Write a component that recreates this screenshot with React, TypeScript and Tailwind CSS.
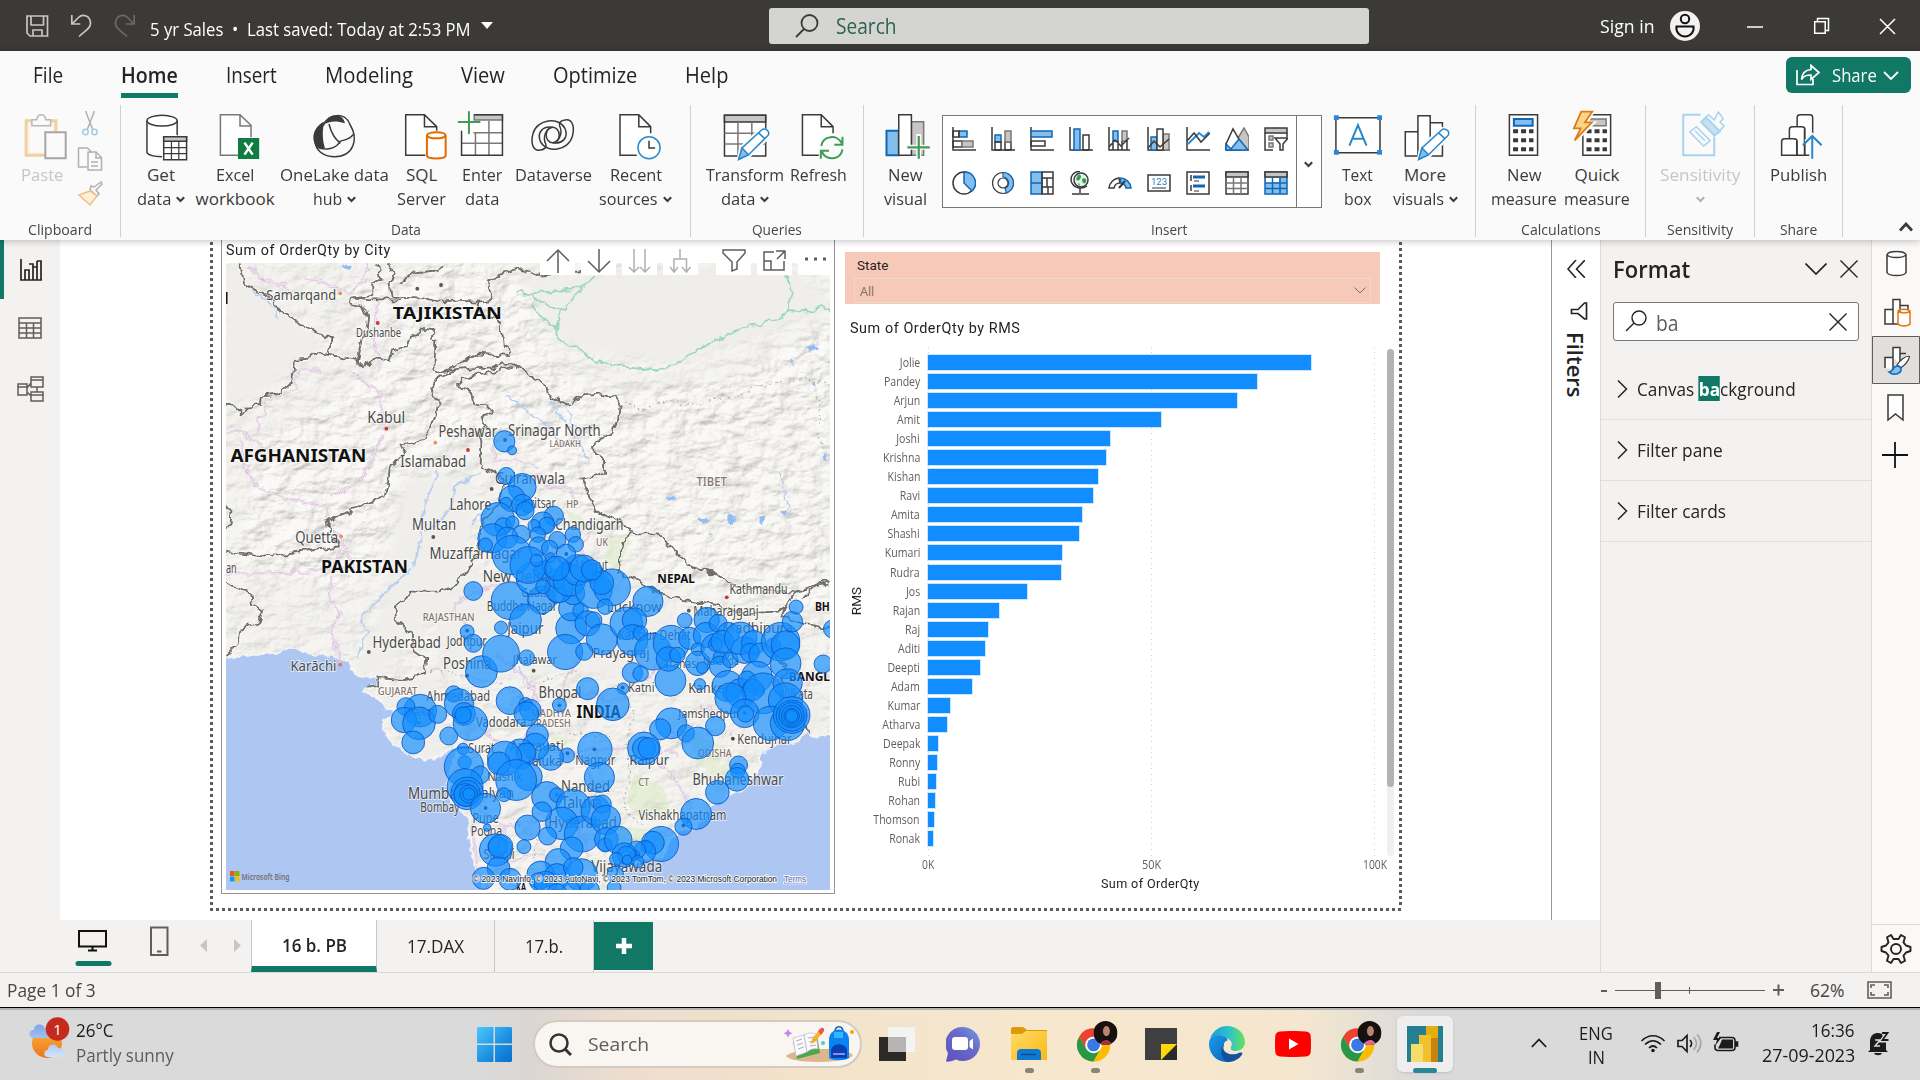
import React, { useLayoutEffect, useRef, useState } from "react";

type Kids = { children?: React.ReactNode };

/* Text squeezed or stretched horizontally to fill the width of its box. */
function Fit({ className = "", children }: Kids & { className?: string }) {
  const box = useRef<HTMLSpanElement>(null);
  const text = useRef<HTMLSpanElement>(null);
  const [k, setK] = useState(1);
  useLayoutEffect(() => {
    if (box.current && text.current) setK(box.current.clientWidth / text.current.offsetWidth);
  }, []);
  return (
    <span ref={box} className={"block shrink-0 whitespace-nowrap " + className}>
      <span ref={text} className="inline-block origin-left" style={{ transform: `scaleX(${k})` }}>
        {children}
      </span>
    </span>
  );
}

/* Free-stretch drawing surface with constant stroke widths. */
function Draw({ box, className = "", children }: Kids & { box: string; className?: string }) {
  return (
    <svg
      viewBox={box}
      preserveAspectRatio="none"
      fill="none"
      stroke="#3b3a39"
      strokeWidth="1.5"
      className={"block shrink-0 [&_*]:[vector-effect:non-scaling-stroke] " + className}
    >
      {children}
    </svg>
  );
}

const Chev = ({ className = "text-[#3b3a39]" }: { className?: string }) => (
  <svg viewBox="0 0 9 7" className={"block h-[7px] w-[9px] shrink-0 " + className} fill="none" stroke="currentColor" strokeWidth="2">
    <path d="M.8 1.2 4.5 5 8.2 1.2" />
  </svg>
);

/* ---------------------------------------------------------------- title */
function TitleBar() {
  return (
    <header className="flex h-[51px] shrink-0 items-center bg-[#3b3a38] text-white">
      <svg viewBox="24 12 114 30" className="ml-6 h-[30px] w-[114px]" fill="none" stroke="#c8c6c4" strokeWidth="1.7">
        <path d="M27 17h20.500v20H30l-3-3zM31 17v9h12.500v-9M33 37v-6h9v6" />
        <path d="M71.800 16v9h8.500M72 25l6.500-6.500C83 14 90.500 17 90.500 24.500c0 5-5 7-11.500 13" />
        <path stroke="#6b6967" d="M134.200 16v9h-8.500M134 25l-6.500-6.500C123 14 115.500 17 115.500 24.500c0 5 5 7 11.500 13" />
      </svg>
      <Fit className="ml-[12px] w-[321px] pt-[6px] text-[18px] leading-6">5 yr Sales&nbsp; •&nbsp; Last saved: Today at 2:53 PM</Fit>
      <span className="ml-[10px] h-0 w-0 border-x-[6.500px] border-t-[7px] border-x-transparent border-t-white" />
      <div className="ml-[276px] flex h-9 w-[600px] items-center rounded-[3px] bg-[#d4d4d1] pt-px text-[#2d6156]">
        <svg viewBox="0 0 24 24" className="ml-[26px] h-6 w-6" fill="none" stroke="#3b3a39" strokeWidth="1.8">
          <circle cx="14.500" cy="9" r="8" />
          <path d="M9 15 1 23" />
        </svg>
        <Fit className="ml-[17px] w-[61px] text-[21px] leading-7">Search</Fit>
      </div>
      <Fit className="ml-[231px] w-[55px] pt-px text-[18px] leading-6">Sign in</Fit>
      <svg viewBox="0 0 30 30" className="ml-[15px] h-[30px] w-[30px]">
        <circle cx="15" cy="15" r="15" fill="#f3f2f1" />
        <g fill="none" stroke="#111" strokeWidth="2">
          <circle cx="15" cy="8" r="4.200" />
          <path d="M6.500 15.500h17c1 5-3 10-8.500 10s-9.500-5-8.500-10z" />
        </g>
      </svg>
      <svg viewBox="1745 16 154 24" className="ml-[45px] h-6 w-[154px]" fill="none" stroke="#fff" strokeWidth="1.5">
        <path d="M1747 29h16M1814.700 23.700h10.500v11.500h-10.500zM1817.500 23v-2.500h11v12h-2.700M1880 21l15 15m0-15-15 15" />
      </svg>
    </header>
  );
}

/* ---------------------------------------------------------------- ribbon */
const tabs: [string, string][] = [
  ["File", "w-[30px] mr-[10px]"],
  ["Home", "w-[57px]"],
  ["Insert", "w-[51px]"],
  ["Modeling", "w-[88px]"],
  ["View", "w-[44px]"],
  ["Optimize", "w-[84px]"],
  ["Help", "w-[43px]"],
];

function Tabs() {
  return (
    <nav className="flex h-[54px] gap-12 pl-[33px] pt-2 text-[21px] leading-8 text-[#252423]">
      {tabs.map(([t, w]) => (
        <div key={t} className={"h-[39px] " + w + (t === "Home" ? " border-b-[5px] border-[#117865] font-semibold" : "")}>
          <Fit>{t}</Fit>
        </div>
      ))}
      <div className="-mt-[2px] ml-auto mr-[9px] flex h-9 w-[125px] items-center rounded-md bg-[#117865] text-white">
        <svg viewBox="0 0 24 22" className="ml-[10px] h-[22px] w-6" fill="none" stroke="#fff" strokeWidth="1.700">
          <path d="M1 6v14.500h16V15M15 1.500l8 7-8 7V11c-5 0-8 1.500-9.500 4.500C6 9 9 6 15 5.500z" />
        </svg>
        <Fit className="ml-3 w-[45px] text-[18.500px]">Share</Fit>
        <svg viewBox="0 0 16 9" className="ml-[6px] h-[9px] w-4" fill="none" stroke="#fff" strokeWidth="1.800">
          <path d="m1 1 7 7 7-7" />
        </svg>
      </div>
    </nav>
  );
}

function Group({ label, className, lw, children }: Kids & { label: string; className: string; lw: string }) {
  return (
    <section className={"flex h-[132px] shrink-0 flex-col border-r border-[#d2d0ce] " + className}>
      <div className="flex h-[114px] pt-[3px]">{children}</div>
      <div className="flex h-[18px] justify-center text-[15px] leading-[20px] text-[#484644]">
        <Fit className={lw}>{label}</Fit>
      </div>
    </section>
  );
}

type BtnProps = Kids & { w: string; box: string; a: string; aw: string; b?: string; bw?: string; chev?: boolean; off?: boolean };
function Btn({ w, box, a, aw, b, bw = "", chev, off, children }: BtnProps) {
  return (
    <div className={"flex shrink-0 flex-col items-center text-[17px] leading-6 " + w + (off ? " text-[#c8c6c4]" : " text-[#3b3a39]")}>
      <Draw box={box} className="mb-px h-[54px] w-full">{children}</Draw>
      <Fit className={aw}>{a}</Fit>
      <div className="flex h-6 items-center justify-center gap-[5px]">
        {b && <Fit className={bw}>{b}</Fit>}
        {chev && <Chev className={off ? "text-[#b3b0ad]" : "text-[#3b3a39]"} />}
      </div>
    </div>
  );
}

const Small = ({ children }: Kids) => (
  <svg viewBox="0 0 24 24" className="h-6 w-6" fill="none" stroke="#3b3a39" strokeWidth="1.500">{children}</svg>
);
const B = "#83beec";
const BS = "#1267b4";
const G = "#c8c6c4";

const gallery: React.ReactNode[] = [
  <><path d="M1 0v23h23" /><path fill={B} stroke={BS} d="M7 4h8v6H7z" /><path d="M1 4h6v6H1zM1 14h9v6H1z" /><path fill={G} stroke="#7a7876" d="M10 14h11v6H10z" /></>,
  <><path d="M1 0v23h23" /><path fill={B} stroke={BS} d="M4 8h6v7H4z" /><path d="M4 15h6v8H4zM14 15h6v8h-6z" /><path fill={G} stroke="#7a7876" d="M14 4h6v11h-6z" /></>,
  <><path d="M1 0v23h23" /><path fill={B} stroke={BS} d="M1 4h21v6H1z" /><path d="M1 14h14v5H1z" /></>,
  <><path d="M1 0v23h23" /><path fill={B} stroke={BS} d="M5 2h6v21H5z" /><path d="M14 8h6v15h-6z" /></>,
  <><path d="M1 0v23h21" /><path fill={B} stroke={BS} d="M5 4h5v10H5z" /><path fill={G} stroke="#7a7876" d="M14 4h5v10h-5z" /><path d="M5 14v9M10 14v9M14 14v9M19 14v9M1 20l6-7 6 6 8-8" /></>,
  <><path d="M1 0v23h22" /><path fill={B} stroke={BS} d="M4 10h6v13H4z" /><path fill={G} stroke="#7a7876" d="M16 7h6v16h-6z" /><path fill="#fff" d="M10 2h6v21h-6z" /><path d="m1 21 6-7 6 6 9-8" /></>,
  <><path d="M1 0v23h23" /><path stroke="#2b88d8" strokeWidth="2" d="m2 17 11-11 5 4 5-5" /><path d="m1 14 7-8 7 9 9-9" /></>,
  <><path fill={G} stroke="#7a7876" d="M13 11 19 1l5 9v13h-6z" /><path fill="#fff" d="M1 17 8 2l8 14v7H1z" /><path fill={B} stroke={BS} d="M1 17l5 5 8-10 9 11H1z" /></>,
  <><path fill={G} d="M1 1h22v5H1z" /><path d="M1 6v17h8M23 6v4" /><path fill={G} stroke="#7a7876" d="M5 9h4v4H5zM5 16h4v4H5z" /><path fill="#fff" d="M11 11h13l-5 6v6h-3v-6z" /></>,
  <><circle cx="12" cy="12" r="11" fill="#fff" /><path fill={B} stroke={BS} d="M12 1a11 11 0 0 1 8 19l-8-8z" /></>,
  <><circle cx="12" cy="12" r="10.500" strokeWidth="1.200" /><path fill={B} stroke={BS} strokeWidth="1.200" d="M12 1.500a10.500 10.500 0 0 1 3.500 20.400l-1.500-4.400A6 6 0 0 0 12 6z" /><circle cx="12" cy="12" r="5" fill="#fff" strokeWidth="1.200" /></>,
  <><path fill={B} stroke={BS} d="M1 1h11v22H1zM1 12h11" /><path d="M12 1h11v22H12zM12 7h11M17 7v9M12 16h11M18 16v7" /></>,
  <><circle cx="12" cy="9" r="7" fill="#e8f5ea" /><path fill="#2f9e4f" stroke="none" d="M9 4c3-1 4 2 2 4-1 2-3 2-4 0zM13 8c3-2 5 0 4 3-2 3-4 1-4-3zM9 12l2 1-1 2z" /><path d="M11 .5C4 0 1 6 2.500 11c2 6 10 8 15.500 4M11 17v5M3 23h17" /></>,
  <><path fill="#fff" d="M1 17a11 11 0 0 1 10-10l1 5a6 6 0 0 0-6 5z" /><path fill={B} stroke={BS} d="M12 7a11 11 0 0 1 11 10h-5a6 6 0 0 0-5-5z" /><path strokeWidth="2" d="m11 17 6-7" /></>,
  <><path fill="#fff" d="M1 4h22v16H1z" /><text x="4" y="14" fontSize="9.500" fill="#1f7fc9" stroke="none" fontFamily="Roboto" textLength="16">123</text><path d="M5 17h14" stroke="#7a7876" /></>,
  <><path fill="#fff" d="M1 1h22v22H1z" /><path d="M5 4v6M5 14v6" /><path stroke={BS} strokeWidth="3" d="M7 6h12M7 15h12" /><path stroke="#7a7876" d="M8 10h5M8 20h5" /></>,
  <><path fill="#fff" d="M1 1h22v22H1z" /><path fill={G} d="M1 1h22v5H1z" /><path stroke="#7a7876" d="M1 12h22M1 17.500h22M8.500 6v17M16 6v17" /></>,
  <><path fill={B} stroke={BS} d="M1 1h22v22H1z" /><path fill={G} d="M1 1h22v5H1z" /><path fill="#fff" stroke="none" d="M2 7h6v5H2zM9 7h6v4H9z" /><path stroke={BS} d="M1 12h22M1 17.500h22M8.500 6v17M16 6v17" /></>,
];

function Ribbon() {
  return (
    <div className="flex h-[135px] pb-[3px]">
      <Group label="Clipboard" className="w-[121px]" lw="w-[64px]">
        <div className="ml-[12px] flex w-[60px] flex-col items-center text-[17px] leading-6 text-[#c8c6c4]">
          <Draw box="29.400 324 147 162" className="mb-px h-[54px] w-[60px]">
            <path stroke="#f0cfa8" strokeWidth="3" fill="#fdf3e2" d="M64 362h73v104H64z" />
            <path fill="#fafafa" stroke="none" d="M74 376h54v80H74z" />
            <path fill="#fafafa" stroke="#b9b7b5" d="M78 377v-18h12c2-20 20-20 22 0h12v18z" />
            <path fill="#fafafa" stroke="#a9a7a5" strokeWidth="2" d="M111 397h50v78h-50z" />
          </Draw>
          <Fit className="w-[42px]">Paste</Fit>
        </div>
        <svg viewBox="76 108 28 100" className="ml-[4px] h-[100px] w-7" fill="none" stroke="#b3b1af" strokeWidth="1.500">
          <path d="m85.500 111 7 18M94.500 111l-7 18" />
          <g stroke="#9fcbe8"><circle cx="85.500" cy="132" r="2.700" /><circle cx="94.500" cy="132" r="2.700" /></g>
          <path d="M87 167h-8.500v-19h9l3 3v2M88 152h8l5.500 5.500V170H88zM96 152v6h5.500M91 162h7M91 166h7" />
          <path d="m90 190 7 6 2-2-3-4 6-6-1-2-7 5-3-1z" />
          <path stroke="#efc08a" fill="#fdeed8" d="m90 191-11 4 11 10 7-9z" />
        </svg>
      </Group>

      <Group label="Data" className="w-[570px] pl-[11px]" lw="ml-[-11px] w-[30px]">
        <Btn w="w-[58px]" box="323.400 324 142 162" a="Get" aw="w-[28px]" b="data" bw="w-[34px]" chev>
          <path fill="#fff" stroke="none" d="M360 362c10-20 65-20 75 0v100h-75z" />
          <ellipse cx="397" cy="362" rx="37" ry="16" />
          <path d="M360 362v96c4 8 20 12 37 12M434 362v44" />
          <path fill="#fff" d="M401 410h56v69h-56z" /><path fill={G} d="M401 410h56v14h-56z" />
          <path strokeWidth="1.200" d="M401 443h56M401 461h56M420 424v55M438 424v55" />
        </Btn>
        <Btn w="w-[90px]" box="465.500 324 220.500 162" a="Excel" aw="w-[38px]" b="workbook" bw="w-[79px]">
          <path fill="#fff" stroke="#7a7876" d="M583 466h-43V344h48l27 32v36M588 344v34h27" />
          <path fill="#107c41" stroke="none" d="M583 414h52v63h-52z" />
          <path stroke="#fff" strokeWidth="2.500" d="m599 428 20 36M619 428l-20 36" />
        </Btn>
        <Btn w="w-[109px]" box="686 324 267 162" a="OneLake data" aw="w-[109px]" b="hub" bw="w-[29px]" chev>
          <path d="M793 375c10-35 55-40 65 0 20 40 10 94-38 95-50 0-65-60-27-95z" />
          <path fill="#3b3a39" stroke="none" d="M795 372c8-35 46-35 50-2-20-8-35-8-50 2zM792 366c-28 20-32 60-10 80l14-3c-8-30-5-58-2-77z" />
          <path d="M776 440c20 15 50 5 57-16 10-5 20-2 34-22M806 372c4 20 14 45 28 58" />
        </Btn>
        <Btn w="w-[65px]" box="953 324 159.500 162" a="SQL" aw="w-[31px]" b="Server" bw="w-[49px]">
          <path fill="#fff" d="M1042 466h-48V344h46l30 36v12M1040 344v36h30" />
          <path fill="#fff" stroke="#e06c00" strokeWidth="2" d="M1046 406c4-12 42-12 46 0v62c-4 10-42 10-46 0zM1046 406c4 12 42 12 46 0" />
        </Btn>
        <Btn w="w-[56px]" box="1112.500 324 137 162" a="Enter" aw="w-[40px]" b="data" bw="w-[34px]">
          <path fill="#fff" stroke="none" d="M1130 362h101v104h-101z" />
          <path fill={G} stroke="#7a7876" d="M1162 344h69v16h-69z" />
          <path stroke="#7a7876" d="M1165 398v68M1198 362v104M1160 398h71M1130 430h101" />
          <path d="M1131 392v74h100V344h-69" />
          <path stroke="#3f9c55" strokeWidth="2" d="M1149 334v68M1122 366h55" />
        </Btn>
        <Btn w="w-[87px]" box="1249.500 324 213 162" a="Dataverse" aw="w-[77px]">
          <ellipse cx="1354" cy="405" rx="16" ry="23" />
          <path d="M1324 450c-20 4-24-24-18-50 10-42 62-52 78-15 10 30-8 48-30 43M1324 450c10-1 16-8 13-18-8-20 0-44 14-50" />
          <path d="M1384 360c20-4 24 24 18 50-10 42-62 52-78 15-10-30 8-48 30-43M1384 360c-10 1-16 8-13 18 8 20 0 44-14 50" />
        </Btn>
        <Btn w="w-[77px]" box="1462.600 324 188.600 162" a="Recent" aw="w-[52px]" b="sources" bw="w-[59px]" chev>
          <path fill="#fff" d="M1560 466h-41V344h46l29 36v20M1565 344v36h29" />
          <ellipse cx="1590" cy="443" rx="27" ry="33" fill="#fff" stroke="#2b88c8" />
          <path d="M1590 422v22h15" />
        </Btn>
      </Group>

      <Group label="Queries" className="w-[173px] pl-[14px]" lw="ml-[-14px] w-[50px]">
        <Btn w="w-[80px]" box="159.300 324 196 162" a="Transform" aw="w-[78px]" b="data" bw="w-[34px]" chev>
          <path fill="#fff" d="M207 346h101v122H207z" /><path fill={G} d="M207 346h101v20H207z" />
          <path stroke="#7a7876" d="M207 400h101M207 432h101M240 366v102M274 366v102" />
          <path fill="#fafafa" stroke="#fafafa" strokeWidth="4" d="m242 478 6-34 50-58 18 12-3 14-50 60z" />
          <path fill="#fff" stroke="#2b88c8" d="m242 478 8-34 48-54c6-8 22 2 16 16l-48 58zM290 398l16 18" />
          <path fill={B} stroke="#2b88c8" d="m242 478 8-34 16 20z" />
        </Btn>
        <Btn w="w-[67px]" box="355.300 324 164 162" a="Refresh" aw="w-[57px]">
          <path fill="#fff" d="M438 466h-40V344h46l29 36v20M444 344v36h29" />
          <path stroke="#3f9c55" strokeWidth="2" d="M444 438c4-32 40-36 50-8M496 410v24h-20M496 448c-4 32-40 36-50 8M443 476v-24h20" />
        </Btn>
      </Group>

      <Group label="Insert" className="w-[612px] pl-[13px]" lw="ml-[-15px] w-[36px]">
        <Btn w="w-[56px]" box="580.700 324 137.200 162" a="New" aw="w-[35px]" b="visual" bw="w-[43px]">
          <path fill={B} stroke={BS} strokeWidth="2" d="M604 392h30v74h-30z" />
          <path fill={G} stroke="#7a7876" d="M665 365h30v101h-30z" />
          <path fill="#fff" d="M634 344h31v122h-31z" />
          <path stroke="#fafafa" strokeWidth="5" d="M683 402v74M652 442h58" />
          <path stroke="#3f9c55" strokeWidth="2.200" d="M683 408v68M655 442h55" />
        </Btn>
        <div className="ml-[9px] mt-[7px] flex h-[93px] w-[380px] border border-[#7a7876] bg-white">
          <div className="grid w-[354px] grid-cols-[repeat(9,39px)] grid-rows-[44px_44px] border-r border-[#7a7876] pl-[9px] pt-[11px]">
            {gallery.map((g, i) => <Small key={i}>{g}</Small>)}
          </div>
          <div className="flex flex-1 items-center justify-center pr-px pt-[5px]"><Chev /></div>
        </div>
        <div className="w-2" />
        <Btn w="w-[55px]" box="122.500 324 134.800 162" a="Text" aw="w-[31px]" b="box" bw="w-[28px]">
          <path fill="#fff" d="M137 353h108v105H137z" />
          <path fill="#2b88d8" stroke="none" d="M132 346h12v14h-12zM238 346h12v14h-12zM132 450h12v14h-12zM238 450h12v14h-12z" />
          <path stroke="#2b88c8" strokeWidth="2" d="m170 437 21-62 21 62M178 416h27" />
        </Btn>
        <Btn w="w-[80px]" box="257.300 324 196 162" a="More" aw="w-[42px]" b="visuals" bw="w-[51px]" chev>
          <path fill="#fff" d="M307 395h31v73h-31zM368 368h30v100h-30zM338 347h30v121h-30z" />
          <path fill="#fafafa" stroke="#fafafa" strokeWidth="4" d="m340 478 6-34 50-58 18 12-3 14-50 60z" />
          <path fill="#fff" stroke="#2b88c8" d="m340 478 8-34 48-54c6-8 22 2 16 16l-48 58zM388 398l16 18" />
          <path fill={B} stroke="#2b88c8" d="m340 478 8-34 16 20z" />
        </Btn>
      </Group>

      <Group label="Calculations" className="w-[170px] pl-[12px]" lw="ml-[-12px] w-[80px]">
        <Btn w="w-[72px]" box="509.600 324 176.400 162" a="New" aw="w-[35px]" b="measure" bw="w-[66px]">
          <path fill="#fff" d="M562 344h69v122h-69z" /><path fill={B} stroke={BS} strokeWidth="2" d="M573 357h46v20h-46z" />
          <path strokeWidth="4" strokeDasharray="5 3" d="M571 394h50M571 421h50M571 448h50" />
        </Btn>
        <Btn w="w-[74px]" box="686 324 181.300 162" a="Quick" aw="w-[45px]" b="measure" bw="w-[66px]">
          <path fill="#fff" d="M742 344h68v122h-68z" /><path fill={G} stroke="#7a7876" d="M755 357h44v20h-44z" />
          <path strokeWidth="4" strokeDasharray="5 3" d="M751 394h50M751 421h50M751 448h50" />
          <path fill="#fafafa" stroke="#fafafa" strokeWidth="5" d="m735 335-14 50h16l-14 36 40-50h-16l17-36z" />
          <path fill="#fbd58a" stroke="#e07a14" strokeWidth="1.800" d="m738 335-18 50h17l-15 36 42-54h-17l18-32z" />
        </Btn>
      </Group>

      <Group label="Sensitivity" className="w-[109px] pl-[9px]" lw="ml-[-9px] w-[66px]">
        <Btn w="w-[90px]" box="918.800 324 220.500 162" a="Sensitivity" aw="w-[80px]" chev off>
          <g stroke="#a9d3ec">
            <path d="M1030 344h-42v122h76v-56" strokeWidth="2" />
            <path d="m1020 380 34 42-16 16-34-42zM1017 392l24 30" />
            <path d="m1036 360 14-16 14 16 10-24 12 20-8 10 10 12-14 18-8-8" />
            <path fill="#c5e1f3" strokeWidth="2" d="m1032 366 12-14 34 42-14 12z" />
          </g>
        </Btn>
      </Group>

      <Group label="Share" className="w-[88px] pl-[5px]" lw="ml-[-5px] w-[37px]">
        <Btn w="w-[76px]" box="1176 324 186.200 162" a="Publish" aw="w-[57px]">
          <path fill="#fff" d="M1267 380V352c0-4 3-8 8-8h22c5 0 8 4 8 8v114h-20V388M1248 416v-28c0-4 3-8 8-8h22c5 0 8 4 8 8v78h-20v-42M1229 466v-42c0-4 3-8 8-8h22c5 0 8 4 8 8v42z" />
          <path stroke="#fafafa" strokeWidth="6" d="M1304 404v72M1290 428l14-18 14 18" />
          <path stroke="#2b88c8" strokeWidth="2" d="M1304 408v68M1281 436l23-28 23 28" />
        </Btn>
      </Group>
      <svg viewBox="0 0 14 10" className="ml-auto mr-[7px] mt-[117px] h-[10px] w-[14px]" fill="none" stroke="#3b3a39" strokeWidth="2.800">
        <path d="m1 8.500 6-6.500 6 6.500" />
      </svg>
    </div>
  );
}

/* ---------------------------------------------------------------- map */
/* Map grid units: 2.45 per pixel across, 3 per pixel down. */
const px = (x: number) => 210 + x / 2.45;
const py = (y: number) => 240 + y / 3;

const bubblesNorth: number[][] = [
  [721,604,26],[740,631,11],[726,708,21],[765,742,34],[740,776,32],[765,795,26],[725,789,14],[779,798,16],[772,812,22],[705,838,41],
  [718,858,20],[741,848,16],[842,828,24],[815,850,28],[825,856,20],[794,857,15],[762,883,22],[803,884,19],[692,895,36],[675,915,17],
  [728,893,26],[889,884,19],[896,913,19],[851,900,21],[805,920,24],[832,925,20],[740,945,48],[780,975,45],[872,942,24],
  [800,961,15],[834,953,12],[850,985,30],[915,985,33],[935,990,25],
];
const bubblesSouth: number[][] = [
  [645,93,23],[735,122,46],[812,120,34],[773,180,39],[790,55,40],[713,203,16],[630,215,17],[645,250,22],[665,335,39],[713,281,45],
  [776,293,19],[885,205,38],[870,276,43],[885,145,31],[908,152,19],[890,100,28],[850,100,24],[855,85,35],[846,45,15],[870,22,15],
  [850,65,18],[815,80,17],[815,30,22],[840,20,26],[880,60,40],[900,30,38],[940,40,24],[940,90,45],[985,82,45],[960,68,29],
  [968,140,19],[925,190,31],[940,180,20],[960,238,38],[917,275,21],[1073,124,37],[1020,190,40],[1040,180,30],[1035,240,38],
  [1055,220,18],[1085,275,45],[1130,250,44],[1035,338,25],[1055,341,19],[1128,362,38],[1123,297,30],[1145,285,19],[1163,181,18],
  [1175,235,27],[1217,180,31],[1215,225,31],[1195,268,16],[1195,310,30],[1206,323,14],[1245,190,22],[1270,220,27],[1240,265,37],
  [1238,253,17],[1248,290,15],[1250,320,26],[1275,300,19],[1255,245,28],[1310,270,33],[1300,235,40],[1332,248,30],[1323,278,23],
  [1350,285,30],[1380,256,18],[1398,245,47],[1410,255,35],[1410,310,38],[1427,185,25],[1436,141,17],[1525,207,22],[1502,312,22],
  [1340,350,38],[925,386,27],[1012,386,14],[987,433,40],[856,435,17],[1200,373,14],[1268,378,38],[1277,400,20],[1300,400,36],[1316,360,22],
  [1345,392,14],[1330,390,26],[1355,400,50],[1275,415,38],[1415,370,36],[1410,420,42],[1310,460,35],[1312,462,20],[1238,498,24],
  [1373,490,42],[1415,490,42],[1425,465,45],[1425,467,38],[1425,465,31],[1425,467,25],[1425,468,19],[1425,468,15],[1130,490,38],
  [1103,508,26],[1166,520,21],[1195,549,39],[1063,565,40],[1063,565,28],[1075,565,26],[1295,615,22],[1293,632,18],[1291,658,29],
  [1243,697,29],[1191,762,38],[1160,800,21],[943,568,42],[954,652,37],[875,586,18],[835,593,31],[802,525,27],[797,560,33],[760,582,37],
  [775,578,24],[722,595,42],[708,610,28],[735,422,34],[773,432,16],[785,450,26],[775,462,30],[515,452,40],[480,440,22],[475,480,31],
  [512,490,40],[558,463,22],[498,547,28],[585,528,22],[597,402,20],[610,430,36],[622,462,28],[638,490,42],[620,465,20],
  [620,567,14],[624,607,16],[622,620,48],[662,645,22],[625,680,44],[630,700,40],[630,700,32],[625,705,28],[634,702,22],[634,702,15],
  [675,745,37],[780,650,34],[750,660,50],[720,704,17],[825,710,37],[850,705,18],[890,740,42],[862,790,40],[813,755,24],[827,828,22],
  [778,803,31],[769,860,17],[912,822,44],[945,752,36],[961,732,22],[970,780,36],[971,838,29],[968,855,17],[1000,840,34],
  [886,865,28],[853,905,32],[679,803,9],[700,870,40],[705,860,24],[712,860,30],[707,925,28],[670,955,27],[735,958,27],[810,945,34],
  [850,950,32],[805,965,22],[822,968,28],[910,945,40],[890,922,24],[1105,852,43],[1085,848,28],[1070,860,14],[1065,875,27],[1045,870,22],
  [1040,885,12],[1015,885,30],[1020,885,22],[995,897,16],[1022,900,12],[1048,905,15],[993,943,20],[990,983,17],[930,990,24],
  [885,990,22],[850,1000,24],
];

type Label = [string, number, number, number, number, string];
const city = "#4a4a4a";
const land = "#111111";
const area = "#85746c";
const labels: Label[] = [
  ["Samarqand",138,180,171,15,city],["TAJIKISTAN",448,236,267,16.5,land],["Dushanbe",358,291,110,12,city],["Kabul",385,548,93,16,city],
  ["Peshawar",560,591,143,16,city],["Srinagar North",730,587,227,16,city],["LADAKH",832,621,77,9,area],["Islamabad",466,681,162,16,city],
  ["AFGHANISTAN",50,667,333,17,land],["Gujranwala",698,731,172,16,city],["TIBET",1192,739,74,12,area],["Lahore",587,809,103,16,city],
  ["Amritsar",744,803,103,14,city],["HP",873,803,30,11,area],["Chandigarh",845,870,168,16,city],["Multan",495,870,108,16,city],
  ["Quetta",209,908,105,16,city],["UK",946,919,29,11,area],["Muzaffarnagar",538,958,227,16,city],["Meerut",895,991,80,15,city],
  ["PAKISTAN",272,1000,213,17,land],["an",39,998,26,15,city],["New Delhi",668,1025,160,17,city],["NEPAL",1096,1030,92,13,land],
  ["Kathmandu",1273,1062,142,14,city],["BHU",1482,1114,56,12,land],["Maharajganj",1184,1128,160,14,city],["Gautam",763,1070,88,13,city],
  ["Buddha Nagar",678,1112,172,13.5,city],["RAJASTHAN",521,1142,127,10.5,area],["Lucknow",972,1115,134,15,city],["Jaipur",728,1182,89,15.5,city],
  ["Madhipura",1255,1179,173,15,city],["Kanpur Dehat",1000,1200,178,13.5,city],["Hyderabad",398,1223,168,16,city],["Jodhpur",580,1219,98,13.5,city],
  ["Prayagraj",937,1254,140,15,city],["Poshina",571,1288,119,15.5,city],["Jhalawar",742,1271,108,13,city],["Varanasi",1095,1284,103,13,city],
  ["Nalanda",1208,1274,88,13,city],["Karāchi",197,1294,113,15,city],["GUJARAT",411,1364,97,10.5,area],["Ahmedabad",530,1382,156,13.5,city],
  ["Bhopal",805,1375,105,16,city],["Katni",1024,1357,65,13,city],["Kankeshwar",1172,1358,175,14,city],["BANGL",1418,1323,101,13,land],
  ["Kolkata",1392,1378,85,14.5,city],["INDIA",898,1433,108,17,land],["Jamshedpur",1147,1435,153,13,city],["Vadodara",652,1461,123,14,city],
  ["MADHYA",787,1430,97,10.5,area],["PRADESH",785,1460,99,10.5,area],["Rajkot",485,1427,66,13,city],["Kendujhar",1292,1511,133,14,city],
  ["Amravati",735,1532,132,14.5,city],["Taluka",775,1578,87,14.5,city],["Surat",633,1540,65,14,city],["Nagpur",895,1575,98,14,city],
  ["Raipur",1027,1575,98,15,city],["ODISHA",1195,1552,83,10.5,area],["Nashik",680,1622,85,13,city],["CT",1049,1637,27,11,area],
  ["Bhubaneshwar",1182,1635,223,15.5,city],["Nanded",860,1655,120,15.5,city],["Mumbai",485,1676,128,16,city],["Kalyan",645,1675,100,14.5,city],
  ["Taluka",860,1704,100,15.5,city],["Bombay",515,1715,96,14,city],["Hyderabad",829,1764,168,16,city],["Vishakhapatnam",1050,1740,215,14,city],
  ["Pune",643,1748,64,13.5,city],["Poona",639,1787,77,14,city],["Sangli",670,1858,76,14.5,city],["Vijayawada",934,1896,174,16,city],
  ["KA",750,1952,24,11,land],
];
const dots: [number, number, string][] = [
  [411,249,"#c33"],[319,160,"#e8925c"],[432,566,"#c33"],[552,608,"#e8925c"],[632,630,"#c33"],[690,747,"#555"],[547,891,"#555"],[321,889,"#e8925c"],
  [723,600,"#335"],[1266,1072,"#c33"],[1173,1112,"#555"],[389,1236,"#555"],[319,1274,"#e8705c"],[793,1292,"#555"],[630,1172,"#334"],[1281,1496,"#444"],
  [876,1540,"#234"],[942,1528,"#234"],[1011,1343,"#234"],[1310,1419,"#345"],[856,1396,"#345"],[512,1448,"#345"],[630,1307,"#234"],[850,1665,"#345"],
  [675,1704,"#345"],[708,1815,"#345"],[1160,1756,"#234"],[873,942,"#234"],[508,146,"#555"],[566,135,"#555"],
];

const borders = [
  "M75 70 83 130 160 185 165 205 245 270 300 295 293 345 255 338 240 355 208 360 200 430 160 465 122 470 120 495 92 500 78 520 62 500 39 497",
  "M293 345 330 352 362 362 375 378 408 355 440 362 445 335 480 325 490 290 510 285 520 262 545 268 540 300 552 305 550 385 560 400 600 378 625 362 655 340 700 345 735 348 730 320 720 315 715 270 700 235 665 230 655 185",
  "M405 70 412 90 418 120 400 130 400 165 345 172 340 190 372 200 385 235 378 285 370 320 362 362M438 70 450 110 440 130 445 170 520 172 560 185 600 182 655 185 690 180 680 120 700 108 735 95 760 85 795 105 940 90M465 130 500 100 560 90 570 70M345 172 400 178 470 178",
  "M552 400 590 392 640 385 690 382 718 370 750 375 790 410 825 440 830 475 880 492 920 465 958 460 985 470 1005 482 1000 540 985 580 940 605 942 640 968 655 968 700 935 712 912 715 928 770 950 820 1000 840 1035 880 1100 880 1115 905 1135 925 1170 975 1240 1005 1290 1040 1360 1045 1432 1060 1450 1050 1519 1020",
  "M600 395C540 420 535 440 545 460L560 490 545 560 525 600 465 610 480 640 440 680 438 720 425 770 395 785 345 805 345 815 285 840 290 870 315 920 250 930 210 940 130 950 39 935",
  "M745 380 690 395 620 415 605 435 640 460 645 490 685 500 685 520 665 535 680 565 655 570 665 610 663 680 700 700 722 720 715 760 700 800 668 840 655 905 660 940 625 1000 600 1040 555 1055 490 1055 475 1080 455 1100 455 1140 490 1180 500 1235 530 1260 525 1300 480 1320 410 1315 410 1335 380 1340",
  "M1035 880 1015 900 1005 960 1000 1000 1050 1020 1100 1060 1160 1080 1240 1095 1310 1120 1390 1115 1410 1100 1430 1060M1410 1100 1400 1130 1450 1150 1519 1165M1450 1075 1480 1040 1519 1030M39 1030 100 1055 105 1095 130 1110 122 1145 75 1165 70 1215 39 1250M39 800 50 820 48 855 39 865",
  "M1400 1160 1390 1190 1375 1240 1420 1290 1400 1320 1445 1400 1465 1480",
];
const roads = [
  "M95 80 130 120 180 130 190 165M235 115 300 135 340 160 380 120 390 70M345 392 380 430 410 445 420 500 430 565M130 620 70 575 39 578M75 600 85 690 120 745 190 775 285 800 290 855 320 895 345 960 352 990M120 580 120 540 135 520 135 480 210 450 210 400 240 385 270 395M425 580 400 660 360 730 295 770",
  "M320 890 315 940 300 1000 290 1060 320 1120 290 1170 310 1220 320 1270M39 1000 200 1000 300 985M690 620 700 660 760 660 800 680M410 180 405 240 400 300 415 350 415 392",
  "M630 1160 600 1130 600 1090 690 1040 800 1020M800 700 820 740 880 740 900 790M930 870 910 930 920 990M600 1400 640 1450 630 1500 600 1600 630 1680 720 1760 800 1740 900 1760 930 1850M640 1450 700 1500 780 1520 880 1540 945 1525 1060 1530 1150 1540M870 1370 940 1360 985 1395M1060 1530 1130 1600 1180 1700 1130 1760 1000 1880M900 1550 930 1600 945 1700 900 1770M640 1750 650 1830 660 1900 680 1950M720 1760 700 1830 720 1890 760 1950",
  "M700 1240 760 1300 800 1360 790 1440 770 1500M900 1260 870 1320 855 1390M1200 1400 1260 1420 1340 1400M1130 1220 1080 1310 1010 1340M1519 1290 1470 1320 1440 1400M680 1900 760 1850 820 1840",
];
const scaled = "translate(210 240) scale(.40816 .33333)";
const thin = "[&_path]:[vector-effect:non-scaling-stroke]";

function MapArt() {
  return (
    <svg viewBox="226 263 604 627" className="block h-[627px] w-[604px] bg-[#efeeea]" fontFamily="'Noto Sans', 'Open Sans', sans-serif">
      <defs>
        <filter id="relief" x="0" y="0" width="100%" height="100%">
          <feTurbulence type="fractalNoise" baseFrequency="0.038 0.062" numOctaves="4" seed="7" />
          <feDiffuseLighting surfaceScale="4.500" diffuseConstant="1.070" lightingColor="#fffefa">
            <feDistantLight azimuth="225" elevation="60" />
          </feDiffuseLighting>
        </filter>
        <filter id="rough" filterUnits="userSpaceOnUse" x="210" y="250" width="640" height="650">
          <feTurbulence type="fractalNoise" baseFrequency="0.11" numOctaves="2" seed="4" result="n" />
          <feDisplacementMap in="SourceGraphic" in2="n" scale="9" xChannelSelector="R" yChannelSelector="G" />
        </filter>
        <filter id="soft"><feGaussianBlur stdDeviation="12" /></filter>
        <mask id="hills" maskUnits="userSpaceOnUse" x="226" y="263" width="604" height="627">
          <rect x="226" y="263" width="604" height="627" fill="#888" />
          <g transform={scaled} filter="url(#soft)">
            <path fill="#fff" d="M330 150 600 60 750 120 850 380 1010 470 1300 400 1519 250 1519 1100 1300 1080 1100 1000 960 850 780 650 700 600 560 620 460 700 430 900 330 1050 60 960 130 600 300 480 500 300z" />
            <path fill="#000" d="M39 60 80 100 240 280 280 340 200 360 110 480 39 480zM770 120 1420 70 1519 190 1400 260 1150 370 900 330 830 260zM480 720 640 720 640 1000 420 1300 360 1300 430 1080z" />
            <path fill="#181818" d="M560 1000 900 1000 1150 1130 1400 1150 1500 1400 1480 1500 1300 1400 900 1300 500 1300 400 1400 520 1560 620 1560 650 1900 1500 1950 1500 1500 1300 1900 600 1950 560 1200z" />
          </g>
        </mask>
      </defs>
      <rect x="226" y="263" width="604" height="627" filter="url(#relief)" mask="url(#hills)" opacity=".7" />
      <g transform={scaled} fill="none" className={thin}>
        <g fill="#d3e8b4" opacity=".4" stroke="none">
          <path d="M1020 885 980 900 965 960 1000 990 1030 900zM870 810 910 830 930 870 890 860zM1040 1600 1110 1640 1130 1720 1060 1740 1020 1690zM1180 1480 1260 1520 1240 1600 1190 1570zM1000 1760 1080 1770 1060 1830 1000 1820zM820 1480 900 1500 860 1520zM1210 1610 1270 1560 1300 1610 1240 1660zM900 1860 960 1850 950 1890z" />
        </g>
      </g>
      <g filter="url(#rough)">
        <g transform={scaled} fill="none" className={thin}>
          <path fill="#adc6f2" stroke="#fff" strokeOpacity=".6" strokeWidth="2" d="M0 1256 75 1250 160 1238 200 1226 225 1230 245 1242 300 1248 335 1262 345 1290 362 1302 375 1315 415 1318 405 1335 380 1345 375 1355 405 1365 425 1400 455 1415 440 1435 420 1445 430 1480 450 1510 485 1540 525 1560 560 1548 600 1525 620 1515 600 1550 580 1610 585 1660 610 1710 628 1725 632 1750 640 1810 645 1860 660 1910 672 1990H0z" />
          <path fill="#adc6f2" stroke="#fff" strokeOpacity=".6" strokeWidth="2" d="M1560 1470 1490 1490 1460 1478 1440 1505 1390 1510 1350 1540 1350 1565 1325 1635 1270 1670 1230 1700 1200 1750 1150 1775 1125 1800 1110 1855 1060 1860 1020 1890 1005 1910 1000 1990H1560z" />
          <g stroke="#d6b4d8" strokeWidth="2.200" opacity=".85">{roads.map((d, i) => <path key={i} d={d} />)}</g>
          <g stroke="#fbf4fb" strokeWidth=".8">{roads.map((d, i) => <path key={i} d={d} />)}</g>
          <g stroke="#9ed6c3" strokeWidth="1.800">
            <path d="M945 105 910 145 790 160 750 155M790 160 795 210 848 265 860 215 915 145M848 265 850 295 900 330 960 370 1090 393 1130 380 1200 325 1290 270 1400 235 1412 210 1425 160 1415 105M1412 210 1470 215 1500 200 1519 215M795 175 860 215" />
          </g>
          <g stroke="#b6cdf2" strokeWidth="1.600">
            <path d="M555 690 545 740 525 800 520 850 515 900 500 980 420 1070 370 1130 385 1180 360 1260M665 700 600 740 590 800 560 850 530 880M700 780 640 850M100 150 160 200 165 235M720 460 830 560 870 620M830 480 880 560 930 660" />
            <path strokeWidth="1.200" d="M870 500 900 570M760 1280 765 1330M1400 700 1420 830" />
          </g>
          <g fill="#92bdf2" stroke="none">
            <path d="M325 75h25l-5 15-15-5zM1462 322l20-4 8 12-22 8zM1422 362l8 2-2 14zM1120 775l18-8 5 10-18 6zM1195 835l20-5 10 12-20 8zM1270 825l22 10-6 20-16-8zM1350 830l10 2-4 20-8-6zM1400 815l12-8 2 18zM1500 640l14 4-6 20zM1222 875l10 4-4 8zM1475 430l8-6 4 8z" />
          </g>
          <g stroke="#b5b3ae" strokeWidth="1.200" strokeDasharray="2 3">
            <path d="M1005 482 1060 510 1120 480 1200 500 1230 475 1300 470 1340 435 1400 425 1460 418 1519 435M1480 450 1500 520 1485 580 1510 640" />
            <path d="M780 1340 850 1310 900 1290 905 1240M1000 1330 1040 1420 1020 1500 1030 1600 1010 1700 1060 1760M880 1480 980 1490M700 1500 640 1560M1280 1480 1180 1460 1100 1480M740 1740 800 1800 790 1900M530 1290 600 1300 700 1330 760 1360 740 1400" />
          </g>
          <g stroke="#fff" strokeOpacity=".5" strokeWidth="4">{borders.map((d, i) => <path key={i} d={d} />)}</g>
          <g stroke="#706e69" strokeWidth="1.900" strokeLinejoin="round">{borders.map((d, i) => <path key={i} d={d} />)}</g>
        </g>
      </g>
      {dots.map(([x, y, c], i) => <circle key={i} cx={px(x)} cy={py(y)} r="1.900" fill={c} />)}
      <rect x="226" y="292" width="1.500" height="12" fill="#111" />
      {labels.map(([t, x, y, w, s, c], i) => (
        <text
          key={i} x={px(x)} y={py(y)} fontSize={s} textLength={w / 2.45} lengthAdjust="spacingAndGlyphs" fill={c}
          fontWeight={c === land ? 700 : c === area ? 500 : 400}
          stroke="#fff" strokeOpacity=".65" strokeWidth="2" paintOrder="stroke"
        >{t}</text>
      ))}
      <g fill="#118dff" fillOpacity=".68" stroke="#0a58c4" strokeOpacity=".85" strokeWidth="1">
        {bubblesSouth.map(([x, y, r], i) => <circle key={i} cx={px(x)} cy={py(y + 960)} r={r / 2.45} />)}
        {bubblesNorth.map(([x, y, r], i) => <circle key={i} cx={px(x)} cy={py(y)} r={r / 2.45} />)}
      </g>
      <path fill="#f25022" d="M230 871h4.500v5H230z" /><path fill="#7fba00" d="M235 871h4.500v5H235z" />
      <path fill="#00a4ef" d="M230 876.500h4.500v5H230z" /><path fill="#ffb900" d="M235 876.500h4.500v5H235z" />
      <text x="241.500" y="879.500" fontSize="9.500" fontWeight="600" fill="#737373" textLength="48" lengthAdjust="spacingAndGlyphs">Microsoft Bing</text>
      <g fontSize="9" fontFamily="'Liberation Sans', sans-serif" paintOrder="stroke" stroke="#fff" strokeWidth="1.800" strokeOpacity=".85">
        <text x="473" y="881.500" fill="#222" textLength="304" lengthAdjust="spacingAndGlyphs">© 2023 NavInfo, © 2023 AutoNavi, © 2023 TomTom, © 2023 Microsoft Corporation</text>
        <text x="784" y="881.500" fill="#5a6fa8" textDecoration="underline" textLength="22" lengthAdjust="spacingAndGlyphs">Terms</text>
      </g>
    </svg>
  );
}

function VisualHeader() {
  return (
    <svg viewBox="540 245 291 30" className="absolute right-[3px] top-[5px] h-[30px] w-[291px]" fill="none" stroke="#605e5c" strokeWidth="1.500">
      <path fill="#fff" stroke="none" d="M540 245h35v30h-35zM581 245h35v30h-35zM622 245h35v30h-35zM663 245h35v30h-35zM716 245h35v30h-35zM757 245h35v30h-35zM798 245h33v30h-33z" />
      <path d="M558 273v-23M547 261l11-11 11 11M599 249v23M588 261l11 11 11-11" />
      <path stroke="#b3b0ad" d="M634 249v22M629 267l5 5 5-5M645 249v22M640 267l5 5 5-5M680 249v10M674 271v-12h12.500v12M670 267l4 5 4-5M682 267l4.500 5 4-5" />
      <path d="M723 250h22v3l-8 9v7l-5 2v-9l-9-9zM774 252h-10v18h20v-9M764 261h7v9M776 251h9v8M785 251l-8 8" />
      <path fill="#605e5c" stroke="none" d="M805 257.500h3v3h-3zM814 257.500h3v3h-3zM823 257.500h3v3h-3z" />
    </svg>
  );
}

/* ---------------------------------------------------------------- chart */
const bars: [string, number][] = [
  ["Jolie", 383], ["Pandey", 328.5], ["Arjun", 309], ["Amit", 233], ["Joshi", 182], ["Krishna", 178], ["Kishan", 170], ["Ravi", 165],
  ["Amita", 154], ["Shashi", 151], ["Kumari", 134], ["Rudra", 132.5], ["Jos", 98.5], ["Rajan", 71], ["Raj", 59.5], ["Aditi", 57],
  ["Deepti", 52], ["Adam", 44], ["Kumar", 22], ["Atharva", 19], ["Deepak", 10], ["Ronny", 9], ["Rubi", 8], ["Rohan", 7],
  ["Thomson", 6], ["Ronak", 5],
];
const vdots = "absolute inset-y-0 w-px bg-[repeating-linear-gradient(to_bottom,#d0d0d0_0_1px,transparent_1px_5.400px)] ";

function Chart() {
  return (
    <div className="font-[Roboto,sans-serif] text-[#252423]">
      <Fit className="ml-[5px] mt-[14px] w-[170px] text-[15.500px] leading-[21px] tracking-[.6px]">Sum of OrderQty by RMS</Fit>
      <div className="mt-[8px] flex h-[509px]">
        <div className="flex w-[19px] items-center justify-center pl-[3px]">
          <span className="rotate-180 text-[13.500px] leading-4 [writing-mode:vertical-rl]">RMS</span>
        </div>
        <div className="flex w-[56px] flex-col items-end pt-[6px] font-['Open_Sans',sans-serif] text-[12px] text-[#605e5c]">
          {bars.map(([n]) => (
            <span key={n} className="h-[19.060px] origin-right scale-x-[.88] leading-[19px]">{n}</span>
          ))}
        </div>
        <div className="relative ml-2 flex w-[459px] flex-col pt-[8px]">
          <div className={vdots + "left-0"} />
          <div className={vdots + "left-[223px]"} />
          <div className={vdots + "left-[446px]"} />
          {bars.map(([n, v]) => (
            <div key={n} className="relative h-[19.060px]">
              <div className="h-[15px] bg-[#118dff] outline outline-1 outline-[#a8d4fb]/60" style={{ width: `${v}px` }} />
            </div>
          ))}
        </div>
        <div className="mt-[2px] h-[507px] w-[7px] rounded-full bg-[#f0f0f0]">
          <div className="h-[438px] rounded-full bg-[#b3b3b3]" />
        </div>
      </div>
      <div className="ml-[71px] flex gap-[199.500px] pt-px font-['Open_Sans',sans-serif] text-[12px] leading-4 text-[#605e5c]">
        <Fit className="ml-[6px] mr-[6px] w-[12px]">0K</Fit>
        <Fit className="ml-[2px] mr-[3px] w-[19px]">50K</Fit>
        <Fit className="w-[24px]">100K</Fit>
      </div>
      <Fit className="ml-[256px] mt-[2px] w-[99px] text-[13.500px] leading-4 tracking-[.4px]">Sum of OrderQty</Fit>
    </div>
  );
}

function Canvas() {
  return (
    <main className="flex h-[680px] w-[1491px] flex-col bg-white">
      <div className="ml-[150px] flex h-[668px] w-[1192px]">
        <div className="w-[3px] bg-[repeating-linear-gradient(to_bottom,transparent_0_2px,#5b5b5b_2px_5px,transparent_5px_6px)]" />
        <div className="relative ml-2 h-[654px] w-[614px] shrink-0 border border-t-0 border-[#979593] pl-1">
          <Fit className="h-[23px] w-[165px] font-[Roboto,sans-serif] text-[15px] leading-[21px] tracking-[.6px] text-[#252423]">Sum of OrderQty by City</Fit>
          <MapArt />
          <VisualHeader />
        </div>
        <div className="ml-[10px] w-[554px] shrink-0">
          <div className="mt-3 h-[52px] w-[535px] bg-[#f6c9b8] pt-[4px]">
            <Fit className="ml-[12px] w-[31px] font-[Roboto,sans-serif] text-[13.500px] leading-[18px] text-[#252423]">State</Fit>
            <div className="ml-[9px] mt-[4px] flex h-[25px] w-[517px] items-center border border-[#ecdad2] pl-[5px] pt-[3px] text-[12.500px] text-[#7a6e69]">
              <Fit className="w-[14px]">All</Fit>
              <svg viewBox="0 0 12 7" className="mb-[3px] ml-auto mr-1 h-[7px] w-3" fill="none" stroke="#7a6e69"><path d="m.5.500 5.500 5.500 5.500-5.500" /></svg>
            </div>
          </div>
          <Chart />
        </div>
        <div className="w-[3px] bg-[repeating-linear-gradient(to_bottom,transparent_0_2px,#5b5b5b_2px_5px,transparent_5px_6px)]" />
      </div>
      <div className="ml-[150px] h-[3px] w-[1192px] bg-[repeating-linear-gradient(to_right,#5b5b5b_0_3px,transparent_3px_6px)]" />
    </main>
  );
}

/* ---------------------------------------------------------------- side panes */
function LeftRail() {
  return (
    <aside className="w-[60px] shrink-0 bg-[#f3f2f1]">
      <div className="flex h-[59px] items-center justify-center border-l-4 border-[#117865] pr-[2px]">
        <svg viewBox="0 0 24 24" className="h-6 w-6" fill="none" stroke="#252423" strokeWidth="1.700">
          <path d="M2 1v21h21M6 12h4v10H6zM10 6h4v16M14 9h4v13M18 3h4v19M14 6v3M18 3v6" />
        </svg>
      </div>
      <div className="mt-[17px] flex justify-center">
        <svg viewBox="0 0 24 24" className="h-6 w-6" fill="none" stroke="#605e5c" strokeWidth="1.500">
          <path d="M1 2h22v20H1zM1 7h22M1 12h22M1 17h22M8.500 7v15M15.500 7v15" />
        </svg>
      </div>
      <div className="mt-9 flex justify-center pl-[2px]">
        <svg viewBox="0 0 28 26" className="h-[26px] w-7" fill="none" stroke="#605e5c" strokeWidth="1.500">
          <path d="M14 1h12v10H14zM14 4h12M14 16h12v9H14zM14 19h12M1 8h9v11H1zM1 11h9M10 12l4-5M10 16l4 4M20 11v5" />
        </svg>
      </div>
    </aside>
  );
}

function Filters() {
  return (
    <aside className="flex h-[680px] w-[49px] flex-col items-center border-l border-[#9c9a98] bg-white">
      <svg viewBox="0 0 18 18" className="mt-5 h-[18px] w-[18px]" fill="none" stroke="#252423" strokeWidth="1.600">
        <path d="M9 0 1 9l8 9M18 0 9.500 9l8.500 9" />
      </svg>
      <svg viewBox="0 0 18 18" className="ml-[6px] mt-6 h-[18px] w-[18px]" fill="none" stroke="#252423" strokeWidth="1.700">
        <path d="M16.500 1v16h-2L8 11.500H1.500v-4H8L14.500 1z" />
      </svg>
      <span className="mt-[12px] text-[22px] font-semibold leading-6 text-[#252423] [writing-mode:vertical-rl]">Filters</span>
    </aside>
  );
}

const Cross = () => (
  <svg viewBox="0 0 18 18" className="h-[18px] w-[18px]" fill="none" stroke="#252423" strokeWidth="1.400"><path d="m.5.500 17 17m0-17-17 17" /></svg>
);

function FormatRow({ w, children }: Kids & { w: string }) {
  return (
    <div className="flex h-[61px] items-center border-b border-[#e1dfdd] pl-4 text-[18.500px] font-medium text-[#252423]">
      <svg viewBox="0 0 11 18" className="mr-[9px] h-[18px] w-[11px]" fill="none" stroke="#252423" strokeWidth="1.500"><path d="m1 .5 8.500 8.500L1 17.500" /></svg>
      <Fit className={w}>{children}</Fit>
    </div>
  );
}

function FormatPane() {
  return (
    <aside className="h-[732px] w-[272px] border-l border-[#dddbd9] bg-[#f3f2f1]">
      <div className="flex h-[62px] items-center pb-[5px] pl-3 pr-[13px]">
        <Fit className="mr-auto w-[77px] text-[24px] font-semibold leading-8 text-[#252423]">Format</Fit>
        <svg viewBox="0 0 22 12" className="mr-[13px] h-3 w-[22px]" fill="none" stroke="#252423" strokeWidth="1.700"><path d="m.5.500 10.500 10.500L21.500.5" /></svg>
        <Cross />
      </div>
      <div className="ml-3 flex h-[39px] w-[246px] items-center rounded-[3px] border border-[#7a7876] bg-white">
        <svg viewBox="0 0 22 22" className="mb-[2px] ml-[11px] h-[22px] w-[22px]" fill="none" stroke="#252423" strokeWidth="1.400"><circle cx="14" cy="8" r="7" /><path d="m9 13-8 8" /></svg>
        <Fit className="ml-[9px] mr-auto w-[23px] pt-[2px] text-[21px] leading-7 text-[#605e5c]">ba</Fit>
        <span className="mr-[11px]"><Cross /></span>
      </div>
      <div className="mt-[18px]">
        <FormatRow w="w-[159px]">Canvas <b className="bg-[#117865] text-white">ba</b>ckground</FormatRow>
        <FormatRow w="w-[86px]">Filter pane</FormatRow>
        <FormatRow w="w-[89px]">Filter cards</FormatRow>
      </div>
    </aside>
  );
}

function RightRail() {
  return (
    <aside className="flex h-[732px] w-[49px] flex-col border-l border-[#dddbd9] bg-[#faf9f8]">
      <svg viewBox="1872 240 48 240" className="h-[240px] w-12" fill="none" stroke="#3b3a39" strokeWidth="1.500">
        <path fill="#e1dfdd" stroke="#605e5c" strokeWidth="1" d="M1872.500 336.500h47v47h-47z" />
        <path fill="#fff" d="M1887 254.500c2-4 17-4 19 0v18c-2 4-17 4-19 0zM1887 254.500c2 4 17 4 19 0" />
        <path fill="#fff" d="M1885 309.500h8V324h-8zM1893 299.500h7V324h-7zM1900 305.500h8v4" />
        <path fill="#fff" stroke="#e8730c" d="M1898 311c2-2.500 10-2.500 12 0v13c-2 2.500-10 2.500-12 0zM1898 311c2 2.500 10 2.500 12 0" />
        <path fill="#fff" d="M1885 368v-10.500h8V369M1893 358v-10.500h7V363M1900 353.500h6" />
        <path fill="#fff" strokeWidth="1.200" d="M1897 365c2-4 9-10 12.500-8.500-.5 4-5 9-9 11.500z" />
        <path fill={B} stroke={BS} d="M1889 372c4 0 4-6 8-6 5 0 5 5 2 7-4 2-8 1-10-1z" />
        <path fill="#fff" d="M1888 395h15v25l-7.500-6-7.500 6z" />
        <path stroke="#111" strokeWidth="1.800" d="M1895 442v26M1882 455h26" />
      </svg>
      <div className="mt-auto flex h-12 items-center justify-center border-t border-[#dddbd9]">
        <svg viewBox="0 0 32 32" className="h-8 w-8" fill="none" stroke="#252423" strokeWidth="1.900" strokeLinejoin="round">
          <circle cx="16" cy="16" r="5" />
          <path d="M13.500 6 11 2 7 4.300l1.500 5L6 12.500 1.500 14v4L6 19.500l2.500 3.200-1.500 5L11 30l2.500-4h5l2.500 4 4-2.300-1.500-5 2.500-3.200 4.500-1.500v-4L26 12.500l-2.500-3.200 1.500-5L21 2l-2.500 4z" />
        </svg>
      </div>
    </aside>
  );
}

/* ---------------------------------------------------------------- bottom bars */
function PageTabs() {
  return (
    <div className="flex h-[52px] bg-[#f3f2f1] pl-[15px] text-[18px] text-[#252423]">
      <svg viewBox="75 920 176 52" className="h-[52px] w-[176px]" fill="none" strokeWidth="2">
        <path stroke="#111" d="M79 931h27v15.500H79zM92.500 947v3M88 950.500h9" />
        <path stroke="#117865" strokeWidth="5" strokeLinecap="round" d="M78 963.500h31" />
        <path stroke="#605e5c" d="M151 927.500h16.500V955H151zM157 951.500h4.500" />
        <path fill="#c8c6c4" d="m207 939-7 6.500 7 6.500zM234 939l7 6.500-7 6.500z" />
      </svg>
      <div className="flex h-[52px] w-[126px] items-center justify-center border-x border-b-[6px] border-x-[#c8c6c4] border-b-[#117865] bg-white pt-[5px]">
        <Fit className="w-[65px] font-semibold">16 b. PB</Fit>
      </div>
      <div className="flex w-[118px] items-center justify-center border-r border-[#c8c6c4]"><Fit className="w-[57px]">17.DAX</Fit></div>
      <div className="flex w-[99px] items-center justify-center border-r border-[#c8c6c4]"><Fit className="w-[38px]">17.b.</Fit></div>
      <div className="mt-[2px] flex h-12 w-[59px] items-center justify-center bg-[#117865]">
        <svg viewBox="0 0 16 16" className="h-4 w-4" stroke="#fff" strokeWidth="4.500"><path d="M8 0v16M0 8h16" /></svg>
      </div>
    </div>
  );
}

function StatusBar() {
  return (
    <div className="flex h-[36px] items-center border-b border-t border-b-black border-t-[#dddbd9] bg-[#f3f2f1] text-[17.500px] text-[#484644]">
      <Fit className="ml-[7px] w-[89px]">Page 1 of 3</Fit>
      <svg viewBox="1600 973 190 34" className="ml-auto h-[34px] w-[190px]" fill="none" stroke="#605e5c" strokeWidth="2">
        <path d="M1601 991h6M1773 990h11M1778.500 984.500v11" />
        <path strokeWidth="1" d="M1615 990.500h150M1689.500 987v7" />
        <path fill="#605e5c" stroke="none" d="M1655 982h6v17h-6z" />
      </svg>
      <Fit className="ml-5 w-[34px]">62%</Fit>
      <svg viewBox="0 0 25 18" className="ml-[23px] mr-7 h-[18px] w-[25px]" fill="none" stroke="#605e5c" strokeWidth="1.600">
        <path d="M1 1h23v16H1zM4 7V4h4M17 4h4v3M4 11v3h4M17 14h4v-3" />
      </svg>
    </div>
  );
}

function Chrome({ pink, gid }: { pink: string; gid: string }) {
  return (
    <svg viewBox="0 0 50 50" className="ml-[10px] h-[50px] w-[50px]">
      <defs><clipPath id={gid}><circle cx="31" cy="13" r="13" /></clipPath></defs>
      <g transform="translate(0 8)">
        <circle cx="18" cy="18" r="18" fill="#fbbc05" />
        <path fill="#ea4335" d="M18 0A18 18 0 0 1 33.600 9H18L10 22.500 2.400 9A18 18 0 0 1 18 0z" />
        <path fill="#279847" d="M2.400 9 10 22.500 18 27l7.500-4.500L18 36A18 18 0 0 1 2.400 9z" />
        <path fill="#fbbc05" d="M18 36 25.800 22.500V9h7.800A18 18 0 0 1 18 36z" />
        <circle cx="18" cy="18" r="9" fill="#fff" /><circle cx="18" cy="18" r="7" fill="#3b78e7" />
      </g>
      <g clipPath={`url(#${gid})`}>
        <path fill="#15100f" d="M18 0h26v26H18z" />
        <path fill={pink} d="M24 26c2-4 7-6 10-5l7 6z" />
        <ellipse cx="32" cy="11" rx="3.800" ry="5.500" fill="#b98570" />
        <path fill="#1b1211" d="M26 15c-2-10 3-13 7-12-4 2-5 5-5 9s1 8-1 10zM34 4c4 3 4 11 2 16l3-2V5z" />
      </g>
    </svg>
  );
}

const Slot = ({ children, dot, active }: Kids & { dot?: boolean; active?: boolean }) => (
  <div className="flex h-[70px] w-[66px] shrink-0 flex-col items-center">
    <div className={"mt-[6px] flex h-14 w-14 items-center justify-center rounded-md " + (active ? "bg-[#eeeeef] shadow-sm" : "")}>{children}</div>
    {dot && <div className="-mt-[4px] h-[5px] w-[9px] rounded-full bg-[#8a8378]" />}
    {active && <div className="-mt-[4px] h-[5px] w-6 rounded-full bg-[#2a8595]" />}
  </div>
);

function Taskbar() {
  return (
    <footer className="flex h-[72px] border-t-2 border-[#b5b3b1] bg-[linear-gradient(to_right,#dadada_0,#dadada_480px,#dbd6d3_530px,#ecddcf_620px,#f2e3cb_820px,#f6e7cd_1050px,#f5e7cf_1300px,#dadada_1420px)] text-[17.500px] leading-[25px] text-[#1b1b1b]">
      <svg viewBox="27 1012 46 50" className="ml-[27px] mt-[2px] h-[50px] w-[46px]">
        <defs>
          <linearGradient id="sun" x1="0" y1="0" x2="0" y2="1"><stop offset="0" stopColor="#f6b73c" /><stop offset="1" stopColor="#f0731e" /></linearGradient>
          <linearGradient id="cloud" x1="0" y1="0" x2="0" y2="1"><stop offset="0" stopColor="#7fa6e6" /><stop offset="1" stopColor="#d3e2fa" /></linearGradient>
        </defs>
        <circle cx="47" cy="1043" r="15" fill="url(#sun)" />
        <path fill="url(#cloud)" d="M34 1038c-6 0-6-8 0-8 0-7 10-7 11-1 5-1 6 4 5 9zM48 1057c-5 0-5-7 0-7 0-7 9-7 10-2 9 0 9 9 2 9z" />
        <circle cx="57.500" cy="1029" r="11.800" fill="#c42b1c" />
        <text x="57.500" y="1034.500" fontSize="15" fill="#fff" textAnchor="middle" fontFamily="Open Sans">1</text>
      </svg>
      <div className="ml-[3px] mt-[8px] w-[100px]">
        <Fit className="w-[38px]">26°C</Fit>
        <Fit className="w-[98px] text-[#5c5c5c]">Partly sunny</Fit>
      </div>
      <svg viewBox="0 0 35 35" className="ml-[301px] mt-[17px] h-[35px] w-[35px]">
        <defs><linearGradient id="win" x1="0" y1="0" x2="1" y2="1"><stop offset="0" stopColor="#4cc8fb" /><stop offset=".6" stopColor="#1a8ee0" /><stop offset="1" stopColor="#0a6fd0" /></linearGradient></defs>
        <path fill="url(#win)" d="M1 0h15.500v16.500H0V1zM18 0h16l1 1v15.500H18zM0 18h16.500v17H1l-1-1zM18 18h17v16l-1 1H18z" />
      </svg>
      <div className="ml-[21px] mt-[10px] flex h-[48px] w-[329px] items-center rounded-full border-2 border-[#d6c9be] bg-[#f9f5f1]">
        <svg viewBox="0 0 23 23" className="ml-[14px] h-[23px] w-[23px]" fill="none" stroke="#333" strokeWidth="2.500"><circle cx="10" cy="10" r="8.500" /><path d="m16 16 6 6" strokeWidth="3" /></svg>
        <Fit className="ml-4 w-[61px] text-[19px] text-[#5c5c5c]">Search</Fit>
        <svg viewBox="783 1026 74 40" className="ml-auto mr-[3px] h-10 w-[74px]">
          <path fill="#dcb78e" d="M786 1058c8-8 58-10 67-1-2 8-60 10-67 1z" />
          <path fill="#4ea64a" d="m793 1043 24-6 3 18-23 6z" />
          <path fill="#fafafc" stroke="#c8bfd6" strokeWidth=".8" d="m793 1040 11-3 3 17-11 4zM804 1037c5-3 9-2 12-1l2 15c-4-1-8 0-11 3z" />
          <path stroke="#9a97b8" strokeWidth=".8" d="m796 1043 6-2M797 1047l6-2M798 1051l6-2M808 1040l6-1M809 1044l6-1M810 1048l6-1" />
          <path fill="#f6b02c" d="m811 1046 1-5 8-10 3 3-8 10z" /><path fill="#f0554b" d="m818 1033 3-3c2-1 4 1 3 3l-3 4z" />
          <path fill="#c77df3" d="m788 1031 1.500 3 3 1.200-3 1.300-1.500 3-1.500-3-3-1.300 3-1.200z" />
          <circle cx="823" cy="1045" r="2" fill="#53c7d8" /><circle cx="852" cy="1034" r="2" fill="#f7a600" />
          <path fill="none" stroke="#0a5bbd" strokeWidth="1.500" d="M835 1034c0-7 8-7 8 0" />
          <path fill="#0b84f3" d="M829 1042c0-14 20-14 20 0v18c-4 3-16 3-20 0z" />
          <path fill="#0a3fb2" d="M831 1053c0-9 16-9 16 0v7h-16z" /><path stroke="#c0b0ff" strokeWidth="1.400" d="M833 1056h12" />
          <path fill="#39b5ff" d="M834 1034h9v6h-9z" />
        </svg>
      </div>
      <div className="ml-[2px] flex">
        <Slot>
          <svg viewBox="0 0 36 36" className="h-9 w-9"><path fill="#2b2a29" d="M0 11h27v24H0z" /><path fill="#f3f3f3" d="M9 1h27v25H9z" /><path fill="#b5b4b3" d="M9 11h18v15H9z" /></svg>
        </Slot>
        <Slot>
          <svg viewBox="0 0 34 36" className="h-9 w-[34px]">
            <defs><linearGradient id="chat" x1="0" x2="1" y1="1" y2="0"><stop offset="0" stopColor="#5c4fc0" /><stop offset=".6" stopColor="#6a6bc9" /><stop offset="1" stopColor="#6f9fe6" /></linearGradient></defs>
            <path fill="url(#chat)" d="M17 1a17 17 0 1 1-7 32.500C7 35 3 36 0 35.500L2 27A17 17 0 0 1 17 1z" />
            <path fill="#fff" d="M9 11h10c2 0 3 1 3 3v7c0 2-1 3-3 3H9c-2 0-3-1-3-3v-7c0-2 1-3 3-3zM23.500 15l3.500-2.500v11L23.500 21z" />
          </svg>
        </Slot>
        <Slot dot>
          <svg viewBox="0 0 36 34" className="h-[34px] w-9">
            <defs><linearGradient id="fold" x1="0" x2="1" y1="0" y2="1"><stop offset="0" stopColor="#ffdb69" /><stop offset="1" stopColor="#f9b916" /></linearGradient></defs>
            <path fill="#dd9b09" d="M0 2c0-1 1-2 2-2h10l4 3h20v8H0z" /><path fill="url(#fold)" d="M0 7h11l4-3h20l1 1v28H0z" />
            <path fill="#0f78d0" d="M6 33v-7c0-3 2-4 4-4h16c2 0 4 1 4 4v7z" /><path stroke="#0a4f95" strokeWidth="1.500" d="M10 27.500h15" />
          </svg>
        </Slot>
        <Slot dot><Chrome gid="av1" pink="#a03440" /></Slot>
        <Slot>
          <svg viewBox="0 0 32 32" className="h-8 w-8"><path fill="#403f40" d="M0 0h32v32H0z" /><path fill="#2a2a2a" d="M16 32 32 16v16z" /><path fill="#fcd90a" d="M16 16h16L16 32z" /></svg>
        </Slot>
        <Slot>
          <svg viewBox="0 0 36 36" className="h-9 w-9">
            <defs>
              <linearGradient id="eg1" x1="0" x2="1" y1="0" y2="0"><stop offset="0" stopColor="#1d9be6" /><stop offset=".55" stopColor="#2fc3c8" /><stop offset="1" stopColor="#6be05a" /></linearGradient>
              <linearGradient id="eg2" x1="0" x2="1" y1="0" y2="1"><stop offset="0" stopColor="#1a9bea" /><stop offset="1" stopColor="#0b62b8" /></linearGradient>
            </defs>
            <path fill="url(#eg1)" d="M1 13C4 4 11 0 18 0c11 0 18 8 18 16 0 6-5 9-9 9-5 0-6-2-5-4 2-3 0-8-5-9C11 9 4 9 1 13z" />
            <path fill="url(#eg2)" d="M0 18C0 10 7 8 13 10c5 1 7 4 5 7-6 3-6 14 5 18-12 4-23-5-23-17z" />
            <path fill="#13509e" d="M14 20c0 8 8 9 13 8 3-1 5-2 6-1 1 0 0 2-1 3-4 5-10 6-14 6-6-4-7-11-4-16z" />
            <path fill="#f6e9d2" d="M15.500 16.500c3-4 7-2 7 1-1 2-3 4 0 6-5 1-9-3-7-7z" />
          </svg>
        </Slot>
        <Slot>
          <svg viewBox="0 0 36 26" className="h-[26px] w-9"><path fill="#f00" d="M5 .5C14-.2 22-.2 31 .5c3 .3 4.500 2 4.700 4.500.4 5 .4 11 0 16-.2 2.500-1.700 4.200-4.700 4.500-9 .7-17 .7-26 0C2 25.200.5 23.500.3 21c-.4-5-.4-11 0-16C.5 2.500 2 .8 5 .5z" /><path fill="#fff" d="m14 7.500 9.500 5.500-9.500 5.500z" /></svg>
        </Slot>
        <Slot dot><Chrome gid="av2" pink="#e0689a" /></Slot>
        <Slot active>
          <svg viewBox="0 0 36 36" className="h-9 w-9"><path fill="#248090" d="M0 0h36v36H0z" /><path fill="#c9820f" d="M19 0h12v36H19z" /><path fill="#e6ad10" d="M19 0h12v12H19z" /><path fill="#f2bf2d" d="M12 9h12v27H12z" /><path fill="#f6dc6a" d="M4 18h12v18H4z" /></svg>
        </Slot>
      </div>
      <svg viewBox="0 0 16 10" className="ml-[73px] mt-[28px] h-[10px] w-4" fill="none" stroke="#1b1b1b" strokeWidth="1.800"><path d="m.8 9 7.200-7.500L15.200 9" /></svg>
      <div className="ml-[31px] mt-[11px] flex w-[36px] flex-col items-center leading-6">
        <Fit className="w-[34px]">ENG</Fit>
        <Fit className="w-[17px]">IN</Fit>
      </div>
      <svg viewBox="1639 1028 102 34" className="ml-[25px] mt-[18px] h-[34px] w-[102px]" fill="none" stroke="#1b1b1b" strokeWidth="1.700">
        <path d="M1641.500 1041c7-7 16-7 23 0M1645 1044.500c5-5 11-5 16 0M1649 1048c2.500-2.500 5.500-2.500 8 0" />
        <circle cx="1653" cy="1050.500" r="1.800" fill="#1b1b1b" stroke="none" />
        <path d="M1678 1040.500h4l5-5v16l-5-5h-4zM1690 1040c2 2 2 5 0 7" />
        <path stroke="#a6a6a6" d="M1693.500 1037c4 4 4 9 0 13M1697 1034.500c5 5 5 12 0 18" />
        <path strokeWidth="1.600" d="M1719 1037.500h13c2 0 3 1 3 3v7c0 2-1 3-3 3h-14c-2 0-3-1-3-3v-3M1736 1042v4h1.500v-4z" />
        <path fill="#1b1b1b" stroke="none" d="M1722 1039.500h11v9h-15l2-4zM1717 1032l-4 8h4l-2 6 6-8h-4l3-6z" />
      </svg>
      <div className="ml-auto mr-[13px] mt-[8px] flex flex-col items-end">
        <Fit className="w-[44px]">16:36</Fit>
        <Fit className="w-[93px]">27-09-2023</Fit>
      </div>
      <svg viewBox="0 0 22 26" className="mr-[30px] mt-[21px] h-[26px] w-[22px]">
        <path fill="#1b1b1b" d="M2 19v-8C2 4 6 2 10 2c5 0 8 4 8 9v8l2 2H0zM6 22h8c-1 3-7 3-8 0z" />
        <path fill="none" stroke="#dadada" strokeWidth="5" d="M14 2h6l-5 7h6" />
        <path fill="none" stroke="#1b1b1b" strokeWidth="1.800" d="M14 2h5.500l-5 7h6" />
        <path fill="none" stroke="#dadada" strokeWidth="1.500" d="M7 9h5l-5 6h5" />
      </svg>
    </footer>
  );
}

export default function App() {
  return (
    <div className="flex h-[1080px] w-[1920px] flex-col overflow-hidden bg-white font-['Open_Sans','Noto_Sans',sans-serif]">
      <TitleBar />
      <div className="relative z-10 h-[189px] shrink-0 bg-[#fafafa] shadow-[0_1px_7px_rgba(0,0,0,.25)]">
        <Tabs />
        <Ribbon />
      </div>
      <div className="flex h-[732px] shrink-0">
        <LeftRail />
        <div className="flex w-[1540px] shrink-0 flex-col">
          <div className="flex h-[680px]">
            <Canvas />
            <Filters />
          </div>
          <PageTabs />
        </div>
        <FormatPane />
        <RightRail />
      </div>
      <StatusBar />
      <Taskbar />
    </div>
  );
}
